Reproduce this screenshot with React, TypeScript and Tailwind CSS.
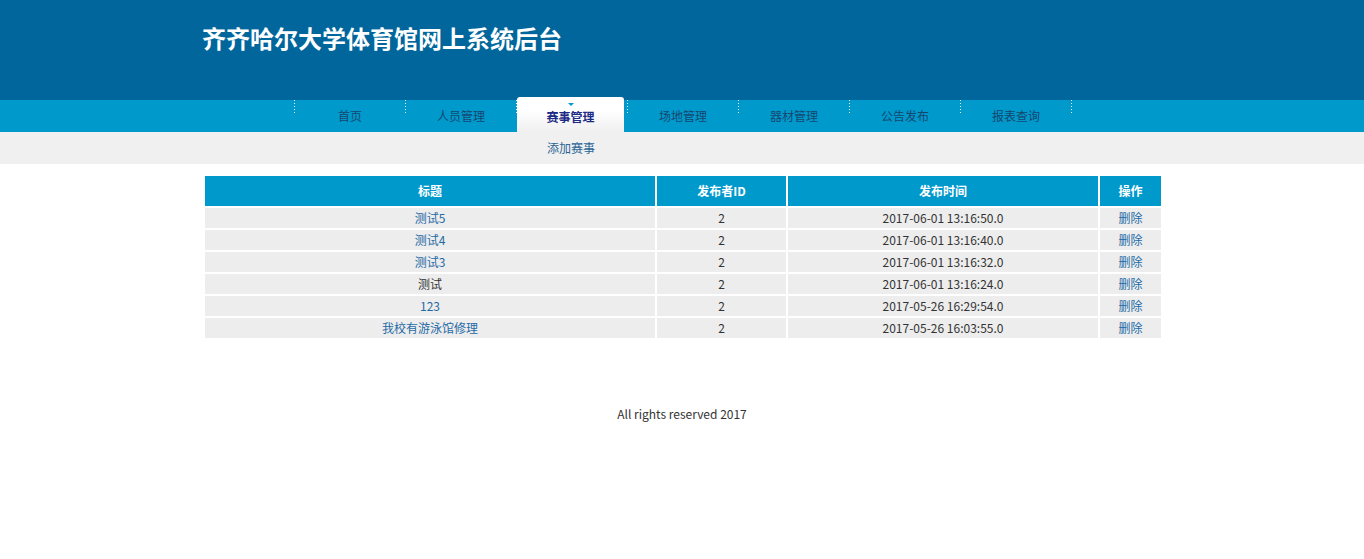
import React from 'react';

const navItems = ['首页', '人员管理', '赛事管理', '场地管理', '器材管理', '公告发布', '报表查询'];

const rows = [
  { title: '测试5', link: true, id: '2', time: '2017-06-01 13:16:50.0' },
  { title: '测试4', link: true, id: '2', time: '2017-06-01 13:16:40.0' },
  { title: '测试3', link: true, id: '2', time: '2017-06-01 13:16:32.0' },
  { title: '测试', link: false, id: '2', time: '2017-06-01 13:16:24.0' },
  { title: '123', link: true, id: '2', time: '2017-05-26 16:29:54.0' },
  { title: '我校有游泳馆修理', link: true, id: '2', time: '2017-05-26 16:03:55.0' },
];

const Separator = () => (
  <div className="self-start w-[1px] h-[14px] bg-[repeating-linear-gradient(to_bottom,#ffffff_0px,#ffffff_1px,transparent_1px,transparent_3px)]" />
);

export default function App() {
  return (
    <div className="min-h-screen bg-white font-['Noto_Sans_CJK_SC',sans-serif] text-[12px] text-[#333]">
      <div className="h-[100px] bg-[#00669b]">
        <div className="w-[960px] mx-auto pt-[20px]">
          <h1 className="text-[24px] font-bold leading-[36px] text-white">齐齐哈尔大学体育馆网上系统后台</h1>
        </div>
      </div>

      <div className="h-[32px] bg-[#0099cc]">
        <div className="flex items-end justify-center h-full pl-[2px]">
          {navItems.map((item, i) => {
            const active = i === 2;
            return (
              <React.Fragment key={item}>
                <Separator />
                {active ? (
                  <div className="w-[110px] h-[35px] flex">
                    <div className="w-[107px] h-full rounded-t-[3px] bg-[linear-gradient(to_bottom,#ffffff_0%,#ffffff_40%,#efefef_100%)] flex flex-col items-center">
                      <div className="mt-[6px] w-0 h-0 border-l-[3px] border-r-[3px] border-t-[3px] border-l-transparent border-r-transparent border-t-[#0099cc]" />
                      <span className="mt-[3px] leading-[16px] font-bold text-[#1c2a86]">{item}</span>
                    </div>
                  </div>
                ) : (
                  <div className="w-[110px] h-[32px] flex items-center justify-center text-[#17476f]">
                    {item}
                  </div>
                )}
              </React.Fragment>
            );
          })}
          <Separator />
        </div>
      </div>

      <div className="h-[32px] bg-[#f0f0f0]">
        <div className="w-[778px] mx-auto h-full flex items-center pl-[254px] pb-[1px]">
          <span className="text-[#2a6496]">添加赛事</span>
        </div>
      </div>

      <div className="w-[958px] mx-auto mt-[12px] pl-[2px]">
        <div className="grid grid-cols-[450px_129px_310px_61px] gap-[2px]">
          {['标题', '发布者ID', '发布时间', '操作'].map((h) => (
            <div key={h} className="h-[30px] bg-[#0099cc] flex items-center justify-center font-bold text-white">
              {h}
            </div>
          ))}
          {rows.map((r) => (
            <React.Fragment key={r.time}>
              <div className={`h-[20px] bg-[#ededed] flex items-center justify-center ${r.link ? 'text-[#1f6aa5]' : 'text-[#333]'}`}>
                {r.title}
              </div>
              <div className="h-[20px] bg-[#ededed] flex items-center justify-center">{r.id}</div>
              <div className="h-[20px] bg-[#ededed] flex items-center justify-center">{r.time}</div>
              <div className="h-[20px] bg-[#ededed] flex items-center justify-center text-[#1f6aa5]">删除</div>
            </React.Fragment>
          ))}
        </div>
      </div>

      <div className="mt-[68px] text-center leading-[16px] text-[#333]">All rights reserved 2017</div>
    </div>
  );
}
